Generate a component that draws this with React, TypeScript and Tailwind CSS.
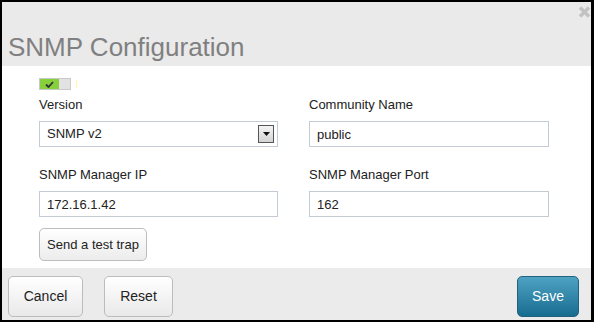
import { useEffect, useRef, useState } from 'react';

const font = { fontFamily: '"Liberation Sans", Arial, sans-serif' };

function Field({ label, children }: { label: string; children: React.ReactNode }) {
    return (
        <div className="flex flex-col">
            <label className="h-4 text-[13px] leading-4 text-[#222]">{label}</label>
            <div className="mt-2">{children}</div>
        </div>
    );
}

function TextInput({
    value,
    onChange,
    inputRef,
}: {
    value: string;
    onChange: (v: string) => void;
    inputRef?: React.Ref<HTMLInputElement>;
}) {
    return (
        <input
            ref={inputRef}
            value={value}
            onChange={(e) => onChange(e.target.value)}
            className="box-border h-[26px] w-full border border-[#c3ccd4] bg-white px-[7px] text-[13px] text-[#222] caret-black outline-none"
            style={font}
        />
    );
}

export default function App() {
    const [enabled, setEnabled] = useState(true);
    const [community, setCommunity] = useState('public');
    const [ip, setIp] = useState('172.16.1.42');
    const [port, setPort] = useState('162');
    const portRef = useRef<HTMLInputElement>(null);

    useEffect(() => {
        const el = portRef.current;
        if (el) {
            el.focus();
            el.setSelectionRange(el.value.length, el.value.length);
        }
    }, []);

    return (
        <div
            className="box-border flex h-[322px] w-[594px] flex-col border-t-2 border-r-[3px] border-b-2 border-l-2 border-black bg-white"
            style={font}
        >
            <div className="relative flex h-[64px] shrink-0 items-end bg-[#eaeaea] px-[6px] pb-[4px]">
                <h1 className="text-[26px] leading-[30px] text-[#808080]">SNMP Configuration</h1>
                <button className="absolute top-[4px] right-0 text-[#c2c2c2]">
                    <svg width="13" height="12" viewBox="0 0 13 12" className="block">
                        <path d="M2 1.5 L11 10.5 M11 1.5 L2 10.5" stroke="currentColor" strokeWidth="3.4" />
                    </svg>
                </button>
            </div>

            <div className="flex-1 px-[37px] pt-[12px]">
                <div className="flex h-[12px] items-center">
                    <button
                        onClick={() => setEnabled(!enabled)}
                        className="flex h-[12px] w-[32px] border border-[#c9c9c9] bg-[#e2e2e2]"
                    >
                        <span className="flex h-full w-[19px] items-center justify-center bg-[#86d03c]">
                            <svg width="9" height="7" viewBox="0 0 9 7">
                                <path d="M1 3.5 L3.5 6 L8 1" fill="none" stroke="#333" strokeWidth="1.8" />
                            </svg>
                        </span>
                    </button>
                    <span className="ml-[5px] h-[8px] w-px bg-[#fff6b0]" />
                </div>

                <div className="mt-[7px] grid grid-cols-[239px_240px] gap-x-[31px] gap-y-[20px]">
                    <Field label="Version">
                        <div className="box-border flex h-[26px] items-center justify-between border border-[#c3ccd4] bg-white pr-[3px] pl-[7px] text-[13px] text-[#222]">
                            <span>SNMP v2</span>
                            <span className="flex h-[18px] w-[16px] items-center justify-center border border-[#555] bg-gradient-to-b from-[#f4f4f4] to-[#d4d4d4]">
                                <svg width="7" height="4" viewBox="0 0 7 4">
                                    <path d="M0 0 H7 L3.5 4 Z" fill="#111" />
                                </svg>
                            </span>
                        </div>
                    </Field>
                    <Field label="Community Name">
                        <TextInput value={community} onChange={setCommunity} />
                    </Field>
                    <Field label="SNMP Manager IP">
                        <TextInput value={ip} onChange={setIp} />
                    </Field>
                    <Field label="SNMP Manager Port">
                        <TextInput value={port} onChange={setPort} inputRef={portRef} />
                    </Field>
                </div>

                <button className="mt-[11px] box-border h-[33px] w-[108px] rounded-[5px] border border-[#bdbdbd] bg-gradient-to-b from-white to-[#ececec] text-[13px] text-[#222]">
                    Send a test trap
                </button>
            </div>

            <div className="flex h-[52px] shrink-0 items-start bg-[#ebebeb] pt-[8px] pr-[12px] pl-[6px]">
                <button className="box-border h-[41px] w-[75px] rounded-[5px] border border-[#bcbcbc] bg-gradient-to-b from-white to-[#e9e9e9] text-[14px] text-[#222]">
                    Cancel
                </button>
                <button className="ml-[21px] box-border h-[41px] w-[69px] rounded-[5px] border border-[#bcbcbc] bg-gradient-to-b from-white to-[#e9e9e9] text-[14px] text-[#222]">
                    Reset
                </button>
                <button className="ml-auto box-border h-[41px] w-[62px] rounded-[5px] border border-[#23627f] bg-gradient-to-b from-[#4da2c3] to-[#166d90] text-[14px] text-white">
                    Save
                </button>
            </div>
        </div>
    );
}
